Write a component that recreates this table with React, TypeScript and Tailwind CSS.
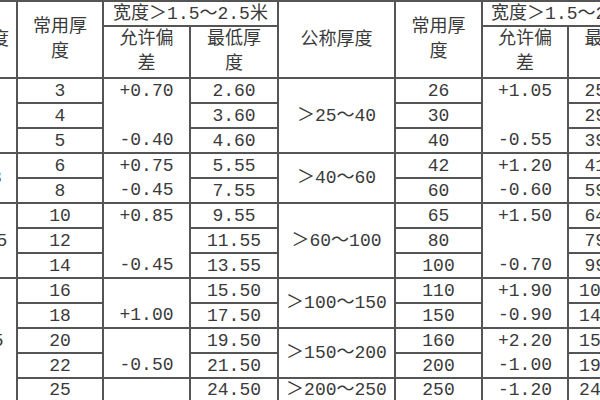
import React from 'react';

// 左半表：常用厚度 / 允许偏差 / 最低厚度
const leftCommon = ['3', '4', '5', '6', '8', '10', '12', '14', '16', '18', '20', '22', '25'];
const leftTol = ['+0.70', '', '-0.40', '+0.75', '-0.45', '+0.85', '', '-0.45', '', '+1.00', '', '-0.50', ''];
const leftMin = ['2.60', '3.60', '4.60', '5.55', '7.55', '9.55', '11.55', '13.55', '15.50', '17.50', '19.50', '21.50', '24.50'];

// 右半表
const rightCommon = ['26', '30', '40', '42', '60', '65', '80', '100', '110', '150', '160', '200', '250'];
const rightTol = ['+1.05', '', '-0.55', '+1.20', '-0.60', '+1.50', '', '-0.70', '+1.90', '-0.90', '+2.20', '-1.00', '-1.20'];
const rightMin = ['25.45', '29.45', '39.45', '41.40', '59.40', '64.30', '79.30', '99.30', '109.10', '149.10', '159.00', '199.00', '248.80'];

// 公称厚度 groups: start row -> [span, label]
const leftGroups: Record<number, [number, string]> = {
  0: [3, '3～5'],
  3: [2, '＞5～8'],
  5: [3, '＞8～15'],
  8: [5, '16～25'],
};
const rightGroups: Record<number, [number, string]> = {
  0: [3, '＞25～40'],
  3: [2, '＞40～60'],
  5: [3, '＞60～100'],
  8: [2, '＞100～150'],
  10: [2, '＞150～200'],
  12: [1, '＞200～250'],
};
const tolBreaks = [0, 3, 5, 8, 10, 12];

const cell = 'p-0 text-center align-middle border-r-2 border-[#555] whitespace-nowrap';

export default function App() {
  return (
    <div
      className="w-[600px] h-[400px] overflow-hidden bg-white text-[#3a3a3a] text-[18px] leading-none"
      style={{ fontFamily: '"Liberation Mono", "Noto Sans CJK SC", monospace' }}
    >
      <table className="table-fixed border-collapse ml-[-70px] w-[722px]">
        <colgroup>
          <col className="w-[87px]" />
          <col className="w-[86px]" />
          <col className="w-[87px]" />
          <col className="w-[88px]" />
          <col className="w-[117px]" />
          <col className="w-[87px]" />
          <col className="w-[86px]" />
          <col className="w-[87px]" />
        </colgroup>
        <thead>
          <tr className="h-[25px]">
            <th rowSpan={2} className={`${cell} font-normal border-t-2`}>公称厚度</th>
            <th rowSpan={2} className={`${cell} font-normal border-t-2 leading-[25px]`}>常用厚<br />度</th>
            <th colSpan={2} className={`${cell} font-normal border-t-2`}>宽度＞1.5～2.5米</th>
            <th rowSpan={2} className={`${cell} font-normal border-t-2`}>公称厚度</th>
            <th rowSpan={2} className={`${cell} font-normal border-t-2 leading-[25px]`}>常用厚<br />度</th>
            <th colSpan={2} className={`${cell} font-normal border-t-2`}>宽度＞1.5～2.5米</th>
          </tr>
          <tr className="h-[50px]">
            <th className={`${cell} font-normal border-t-2 leading-[25px]`}>允许偏<br />差</th>
            <th className={`${cell} font-normal border-t-2 leading-[25px]`}>最低厚<br />度</th>
            <th className={`${cell} font-normal border-t-2 leading-[25px]`}>允许偏<br />差</th>
            <th className={`${cell} font-normal border-t-2 leading-[25px]`}>最低厚<br />度</th>
          </tr>
        </thead>
        <tbody>
          {leftCommon.map((c, i) => {
            const tolTop = tolBreaks.includes(i) ? 'border-t-2' : '';
            const last = i === leftCommon.length - 1 ? 'border-b-[3px] border-b-[#aaa]' : '';
            return (
              <tr key={i} className="h-[25px]">
                {leftGroups[i] && (
                  <td rowSpan={leftGroups[i][0]} className={`${cell} border-t-2 ${last}`}>
                    {leftGroups[i][1]}
                  </td>
                )}
                <td className={`${cell} border-t-2 ${last}`}>{c}</td>
                <td className={`${cell} ${tolTop} ${last}`}>{leftTol[i]}</td>
                <td className={`${cell} border-t-2 ${last}`}>{leftMin[i]}</td>
                {rightGroups[i] && (
                  <td rowSpan={rightGroups[i][0]} className={`${cell} border-t-2 ${last}`}>
                    {rightGroups[i][1]}
                  </td>
                )}
                <td className={`${cell} border-t-2 ${last}`}>{rightCommon[i]}</td>
                <td className={`${cell} ${tolTop} ${last}`}>{rightTol[i]}</td>
                <td className={`${cell} border-t-2 ${last}`}>{rightMin[i]}</td>
              </tr>
            );
          })}
        </tbody>
      </table>
    </div>
  );
}
